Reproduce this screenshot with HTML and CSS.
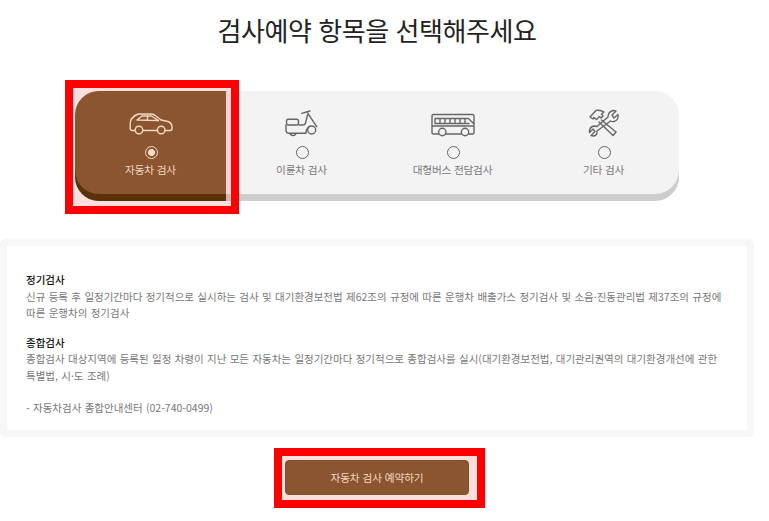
FILE: index.html
```html
<!DOCTYPE html>
<html lang="ko">
<head>
<meta charset="utf-8">
<title>검사예약</title>
<link rel="stylesheet" href="styles.css">
</head>
<body>
<main class="page">
  <h1 class="title">검사예약 항목을 선택해주세요</h1>
  <div class="tabs">
    <div class="mark mark-tab"></div>
    <div class="tab active">
      <svg class="icon" width="44" height="28" viewBox="0 0 44 28"><path d="M6 21.500H3Q1.200 21.500 1.200 19.500V15Q1.500 10 3.500 9Q6 5.500 10 5H22Q25 5 27 7L32 11L39 12.500Q43 14 43 18V20Q43 21.500 41 21.500H36.500M14 21.500H28M8 11L13 7H22.500L29.500 11.500ZM18.500 7V11"/><circle cx="10" cy="21" r="3.800"/><circle cx="32.200" cy="21" r="3.800"/></svg>
      <span class="radio"></span>
      <span class="label">자동차 검사</span>
    </div>
    <div class="tab">
      <svg class="icon" width="36" height="28" viewBox="0 0 36 28"><path d="M22.700 2.700L32.700 17.700M17.700 4.300L26 2M2 16V21Q2 24.300 5 24.300H22Q22 19 26 17.200M15 16H19Q21 16 21.500 14L23.500 6M6 24.300Q6.500 26.500 9 26.500Q11.500 26.500 12 24.300"/><rect x="2.500" y="10.300" width="12" height="5.700" rx="2"/><circle cx="27.700" cy="21" r="4"/></svg>
      <span class="radio"></span>
      <span class="label">이륜차 검사</span>
    </div>
    <div class="tab">
      <svg class="icon" width="44" height="28" viewBox="0 0 44 28"><path d="M7.500 25H2.500Q1 25 1 23.500V7Q1 5.500 2.500 5.500H41.500Q43 5.500 43 7V23.500Q43 25 41.500 25H38M15 25H30M4 9.500H37.500L43 15M4 9.500V14.500H38M1 17H43M9 9.500V14.500M14 9.500V14.500M19 9.500V14.500M24 9.500V14.500M29 9.500V14.500M34 9.500V14.500"/><circle cx="11.300" cy="23" r="3.700"/><circle cx="34" cy="23" r="3.700"/></svg>
      <span class="radio"></span>
      <span class="label">대형버스 전담검사</span>
    </div>
    <div class="tab">
      <svg class="icon" width="32" height="28" viewBox="0 0 32 28"><path d="M2 8L8 1.500Q12 0.500 16 3L13.500 5L15 7L13 9L11.500 7.500L8.500 10.500L6 8.500L5 10ZM13.500 11L28 23L25 26.500L11 13"/><path d="M28 2L24 6L26 9L30 5.500Q31 11 26 12.500Q24 13 22.500 12L9 22Q9.500 26 6 27L3 26.500L7 22.500L5 20L1.500 23.500Q1 18 6 17Q8 17 9 17.500L20 8Q20 3 25 1.500Z"/></svg>
      <span class="radio"></span>
      <span class="label">기타 검사</span>
    </div>
  </div>
  <section class="info">
    <h2 class="info-title">정기검사</h2>
    <p class="info-text">신규 등록 후 일정기간마다 정기적으로 실시하는 검사 및 대기환경보전법 제62조의 규정에 따른 운행차 배출가스 정기검사 및 소음·진동관리법 제37조의 규정에 따른 운행차의 정기검사</p>
    <h2 class="info-title second">종합검사</h2>
    <p class="info-text">종합검사 대상지역에 등록된 일정 차령이 지난 모든 자동차는 일정기간마다 정기적으로 종합검사를 실시(대기환경보전법, 대기관리권역의 대기환경개선에 관한 특별법, 시·도 조례)</p>
    <p class="info-text contact">- 자동차검사 종합안내센터 (02-740-0499)</p>
  </section>
  <div class="action">
    <div class="mark mark-btn"></div>
    <button class="reserve" type="button">자동차 검사 예약하기</button>
  </div>
</main>
</body>
</html>
```
FILE: styles.css
```css
* { box-sizing: border-box; }
html, body { margin: 0; padding: 0; background: #fff; overflow: hidden; }
body { font-family: "Noto Sans CJK KR", "Noto Sans", sans-serif; }
.page { width: 754px; height: 521px; position: relative; }
.title { margin: 0; padding-top: 10px; height: 91px; text-align: center; font-size: 26px; line-height: 40px; font-weight: 400; color: #222; letter-spacing: -0.45px; }
.tabs { position: relative; display: flex; width: 604px; height: 103px; margin: 0 auto; background: #f3f3f3; border-radius: 24px; box-shadow: 0 7px 0 #cdcdcd; }
.tab { position: relative; flex: 1; display: flex; flex-direction: column; align-items: center; padding-top: 18px; color: #777; }
.tab.active { z-index: 2; background: #8a552f; color: #f1d9c6; border-radius: 24px 0 0 24px; box-shadow: 0 7px 0 #5a3209; }
.icon { display: block; fill: none; stroke: #666; stroke-width: 1.4; stroke-linejoin: round; stroke-linecap: round; height: 28px; }
.active .icon { stroke: #f1d9c6; }
.radio { width: 13px; height: 13px; margin: 9px 0 0 2px; border: 1.5px solid #666; border-radius: 50%; }
.active .radio { border-color: #f1d9c6; background: radial-gradient(circle, #f1d9c6 0 3.2px, transparent 3.8px); }
.label { margin-top: 3px; font-size: 10.67px; line-height: 16px; letter-spacing: -0.2px; }
.mark { position: absolute; z-index: 1; border: 8px solid #fe0000; background: rgba(255, 0, 0, 0.13); pointer-events: none; }
.mark-tab { left: -10px; top: -11px; width: 174px; height: 134px; }
.info { width: 754px; height: 198px; margin-top: 45px; padding: 26px 19px 0 19px; background: #fff; border: 7px solid #f7f7f7; border-radius: 6px; }
.info-title { margin: 0; font-size: 10.5px; line-height: 16.5px; font-weight: 500; color: #111; }
.info-title.second { margin-top: 13px; }
.info-text { margin: 0; font-size: 10.5px; line-height: 16.5px; color: #777; word-spacing: 0.42px; }
.contact { margin-top: 16px; }
.action { position: relative; width: 184px; height: 35px; margin: 23px 0 0 285px; }
.mark-btn { left: -11px; top: -12px; width: 211px; height: 60px; }
.reserve { position: relative; z-index: 2; display: block; width: 184px; height: 35px; border: 1px solid #80502c; border-radius: 4px; background: #8a552f; color: #f1d9c6; font: 400 10.67px/16px "Noto Sans CJK KR", sans-serif; letter-spacing: -0.1px; }
```
